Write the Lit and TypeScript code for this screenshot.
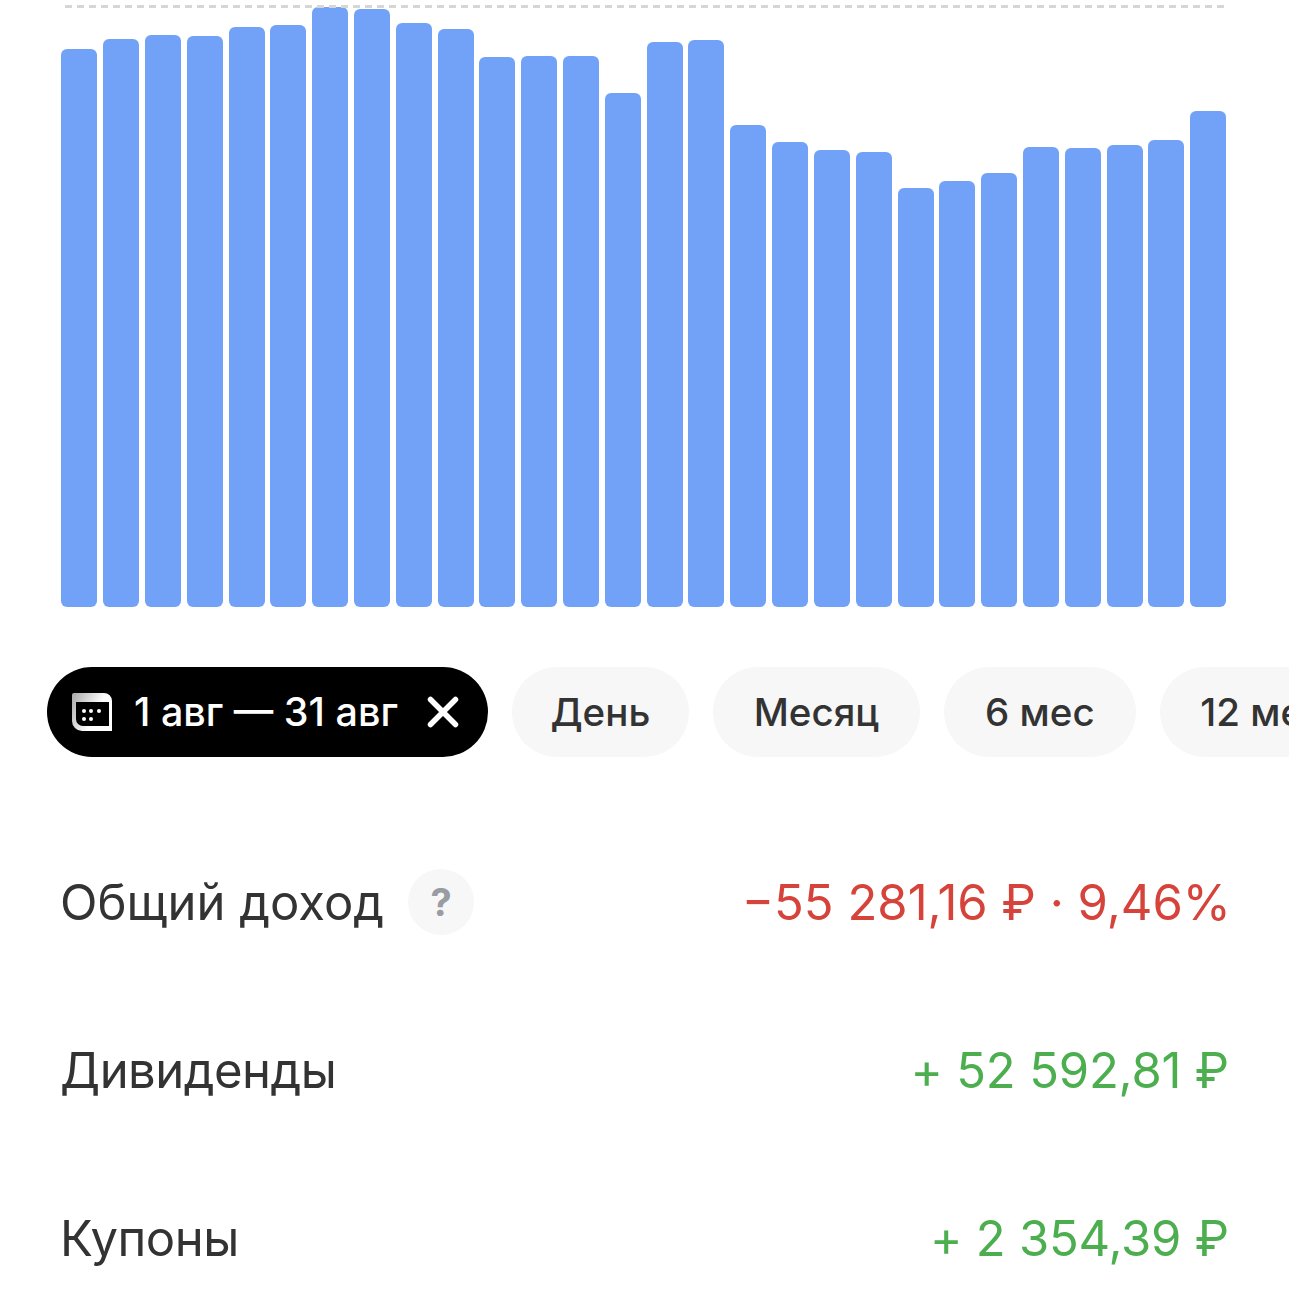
import { css, html, LitElement } from 'lit'
import { customElement } from 'lit/decorators.js'

const BAR_TOPS = [
  49, 39, 35, 36, 27, 25, 7, 9, 23, 29, 57, 56, 56, 93, 42, 40, 125, 142, 150, 152, 188, 181, 173,
  147, 148, 145, 140, 111,
]
const CHART_BOTTOM = 607

const PERIODS = [
  { label: 'День', width: 177 },
  { label: 'Месяц', width: 207 },
  { label: '6 мес', width: 192 },
  { label: '12 мес', width: 206 },
]

@customElement('app-root')
export class AppRoot extends LitElement {
  static styles = css`
    :host {
      display: block;
      height: 1297px;
      overflow: hidden;
      background: #fff;
      font-family: Inter, 'Noto Sans', sans-serif;
      color: #333;
    }

    .chart {
      position: relative;
      height: 607px;
      margin: 0 62.7px 0 61.3px;
      display: flex;
      justify-content: space-between;
      align-items: flex-end;
    }

    .limit {
      position: absolute;
      top: 5px;
      left: 4px;
      right: 2px;
      height: 3px;
      background: repeating-linear-gradient(90deg, #d6d6d6 0 7px, transparent 7px 12px);
    }

    .bar {
      position: relative;
      width: 36px;
      background: #72a2f8;
      border-radius: 6px;
    }

    .chips {
      display: flex;
      gap: 24px;
      margin-top: 60px;
      padding-left: 47px;
      white-space: nowrap;
    }

    .chip {
      flex: none;
      box-sizing: border-box;
      height: 90px;
      display: flex;
      align-items: center;
      justify-content: center;
      border-radius: 45px;
      background: #f7f7f7;
      font-size: 38.5px;
      font-weight: 500;
    }

    .chip.active {
      background: #000;
      color: #fff;
      padding: 0 29px 0 25px;
      gap: 22px;
      font-size: 39.5px;
    }

    .chip.active .close {
      margin-left: 7px;
    }

    .rows {
      margin-top: 103px;
      padding: 0 60px;
      display: flex;
      flex-direction: column;
      gap: 84px;
    }

    .row {
      height: 84px;
      display: flex;
      align-items: center;
      justify-content: space-between;
      font-size: 49px;
    }

    .label {
      display: flex;
      align-items: center;
      gap: 24px;
      color: #333;
    }

    .label.tight {
      letter-spacing: -0.5px;
    }

    .help {
      width: 66px;
      height: 66px;
      border-radius: 50%;
      background: #f7f7f7;
      display: flex;
      align-items: center;
      justify-content: center;
      font-size: 38px;
      font-weight: 700;
      color: #9a9ca3;
    }

    .loss {
      color: #d5433b;
      margin-right: -2px;
    }

    .gain {
      color: #4cae4f;
      letter-spacing: -0.2px;
    }
  `

  private renderCalendar() {
    return html`<svg width="40" height="38" viewBox="0 0 40 38">
      <defs>
        <linearGradient id="cal-fade" x1="0" y1="0" x2="0.7" y2="0.35">
          <stop offset="0" stop-color="#a8a8a8" />
          <stop offset="1" stop-color="#fff" />
        </linearGradient>
      </defs>
      <path
        fill="url(#cal-fade)"
        fill-rule="evenodd"
        d="M0 2a2 2 0 0 1 2-2h30a8 8 0 0 1 8 8v30H10A10 10 0 0 1 0 28zM4 9v17a7 7 0 0 0 7 7h26V9z"
      />
      <g fill="#fff">
        <circle cx="12" cy="18" r="2" />
        <circle cx="19" cy="18" r="2" />
        <circle cx="27" cy="18" r="2" />
        <circle cx="12" cy="26" r="2" />
        <circle cx="19" cy="26" r="2" />
      </g>
    </svg>`
  }

  protected render() {
    return html`
      <div class="chart">
        ${BAR_TOPS.map(
          (top) => html`<div class="bar" style="height:${CHART_BOTTOM - top}px"></div>`,
        )}
        <div class="limit"></div>
      </div>

      <div class="chips">
        <div class="chip active">
          ${this.renderCalendar()}
          <span>1 авг — 31 авг</span>
          <svg class="close" width="32" height="32" viewBox="0 0 32 32">
            <path
              d="M3.5 3.5l25 25M28.5 3.5l-25 25"
              stroke="#fff"
              stroke-width="5.5"
              stroke-linecap="round"
            />
          </svg>
        </div>
        ${PERIODS.map(
          (p) => html`<div class="chip" style="width:${p.width}px">${p.label}</div>`,
        )}
      </div>

      <div class="rows">
        <div class="row">
          <div class="label">Общий доход <span class="help">?</span></div>
          <div class="loss">−55 281,16 ₽ · 9,46%</div>
        </div>
        <div class="row">
          <div class="label tight">Дивиденды</div>
          <div class="gain">+ 52 592,81 ₽</div>
        </div>
        <div class="row">
          <div class="label tight">Купоны</div>
          <div class="gain">+ 2 354,39 ₽</div>
        </div>
      </div>
    `
  }
}
